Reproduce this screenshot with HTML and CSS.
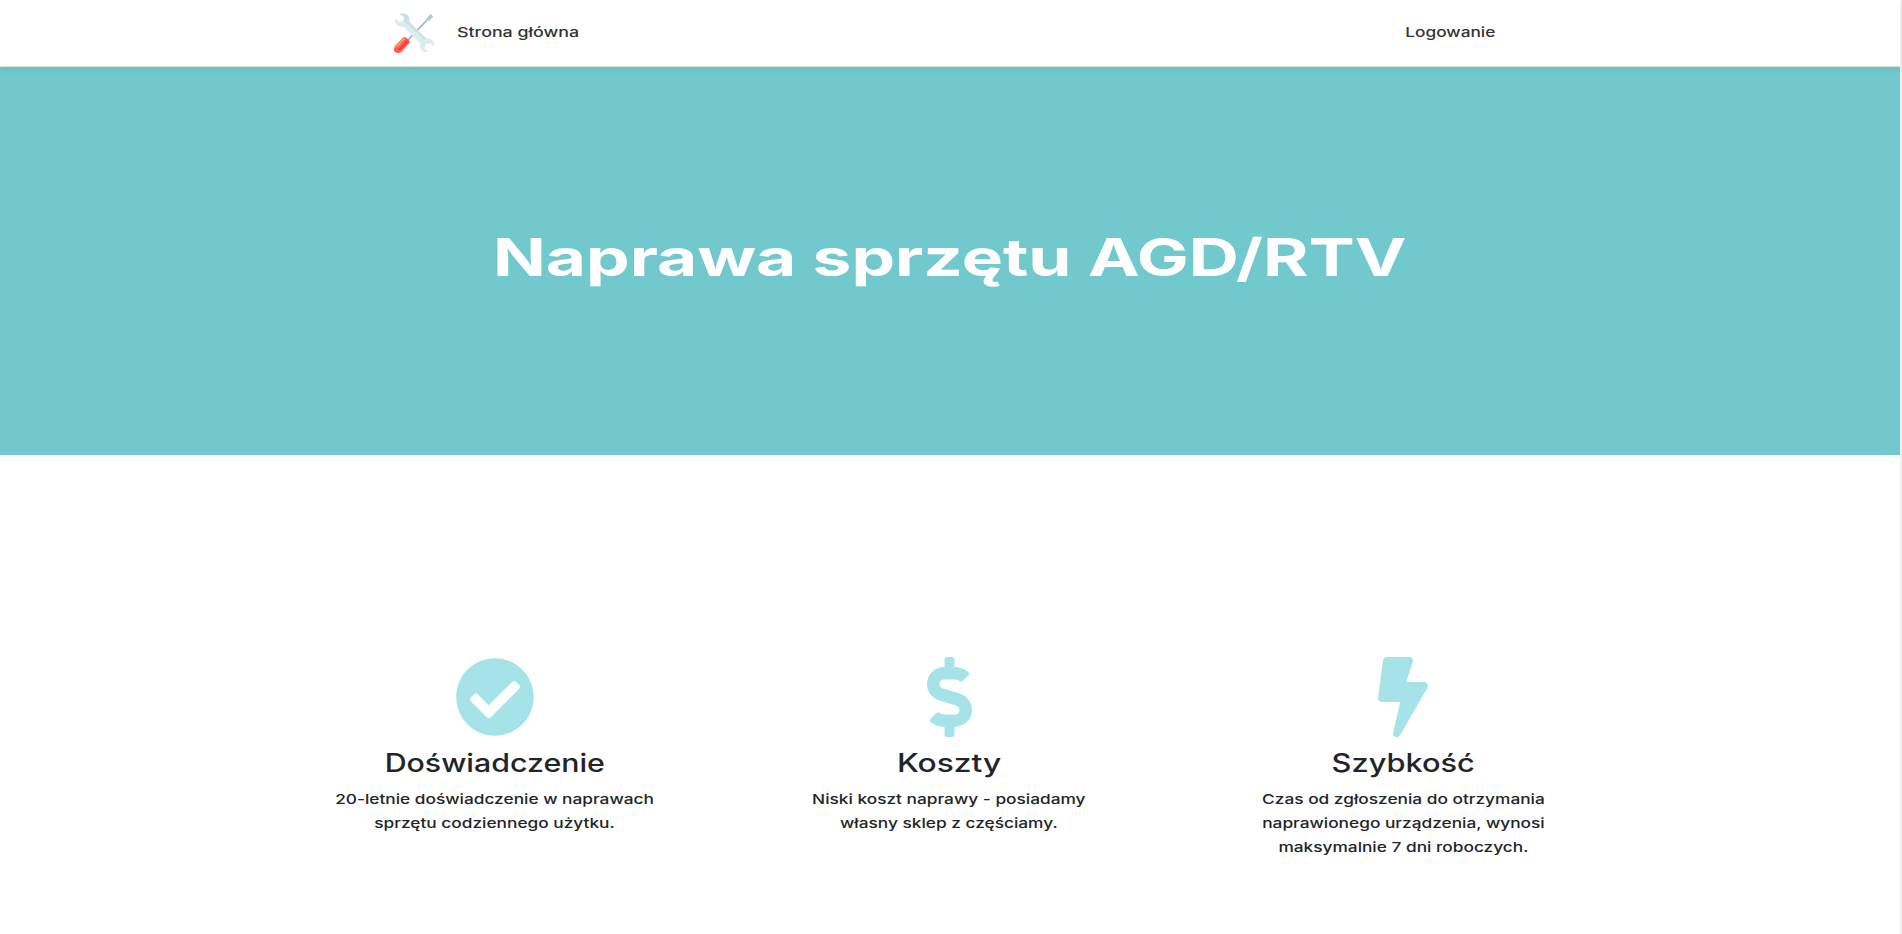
FILE: index.html
```html
<!DOCTYPE html>
<html lang="pl">
<head>
<meta charset="utf-8">
<title>Naprawa sprzętu AGD/RTV</title>
<link rel="stylesheet" href="styles.css">
</head>
<body>
<div class="page">
  <header class="navbar">
    <nav class="nav-inner">
      <svg class="logo" viewBox="0 0 40 40" aria-hidden="true">
        <path d="M35.500 4.500 14 27" stroke="#8db5bd" stroke-width="1.600"/>
        <path d="M32.500 5.500 36.500.8 39.200 3.400 35 7.800 31.800 8.400Z" fill="#a9ced4"/>
        <path d="M5.600 1.200C8 .2 11.400 0 13.500 2.100c1.900 1.900 2.200 4.300 1.500 6.400l17 16.900c2.400-.5 4.900.3 6.500 2.200 1.600 1.900 1.900 4 1.300 6.100l-3.700-3.400-4.200 1.200-1.200 4 3.600 3.200c-2.700.9-5.400.1-7-2-1.500-1.800-1.800-4.200-1.100-6.300L9.500 13.700c-2.600.5-5.100-.1-6.900-2.100C1 9.800.5 7.600 1.200 5.700l4 3.300 4.100-1.100 1-3.900Z" fill="#dfecee"/>
        <path d="M5.600 1.200C8 .2 11.400 0 13.500 2.100c1.900 1.900 2.200 4.300 1.500 6.400l17 16.900-2 1.300L11.500 9 9.300 7.900l1-3.900Z" fill="#c9e1e4"/>
        <path d="M9.200 24.600c1.200-.8 2.600-.5 3.500.4l2.400 2.300c.8.8.8 1.900.1 2.900L7.700 38.400c-1.400 1.500-4.300 2.100-6.400.9C-.7 38-.4 34.900 1 33Z" fill="#ff5a55"/>
        <path d="M9.200 24.600c1.200-.8 2.300-.6 3.100.1L4.600 33.500 0 35.200c0-.8.400-1.600 1-2.200Z" fill="#ff8e69"/>
        <path d="M13.500 27.900 5.200 37" stroke="#ef3446" stroke-width="1.500"/>
      </svg>
      <a class="nav-link home"><span class="wide home-text">Strona główna</span></a>
      <a class="nav-link login"><span class="wide login-text">Logowanie</span></a>
    </nav>
  </header>
  <section class="hero"><h1><span class="wide hero-text">Naprawa sprzętu AGD/RTV</span></h1></section>
  <main class="features">
    <article class="feature">
      <svg class="icon" viewBox="0 0 512 512"><path d="M504 256c0 136.967-111.033 248-248 248S8 392.967 8 256 119.033 8 256 8s248 111.033 248 248zM227.314 387.314l184-184c6.248-6.248 6.248-16.379 0-22.627l-22.627-22.627c-6.248-6.249-16.379-6.249-22.628 0L216 308.118l-70.059-70.059c-6.248-6.248-16.379-6.248-22.628 0l-22.627 22.627c-6.248 6.248-6.248 16.379 0 22.627l104 104c6.249 6.249 16.379 6.249 22.628.001z"/></svg>
      <h2><span class="wide experience-title">Doświadczenie</span></h2>
      <p><span class="wide">20-letnie doświadczenie w naprawach<br>sprzętu codziennego użytku.</span></p>
    </article>
    <article class="feature">
      <svg class="icon" viewBox="0 0 288 512"><path d="M209.200 233.400l-108-31.600C88.700 198.200 80 186.500 80 173.500c0-16.300 13.200-29.500 29.500-29.500h66.300c12.200 0 24.200 3.700 34.200 10.500 6.100 4.100 14.300 3.100 19.500-2l34.800-34c7.100-6.900 6.100-18.400-1.800-24.500C238 74.800 207.400 64.100 176 64V16c0-8.800-7.200-16-16-16h-32c-8.800 0-16 7.200-16 16v48h-2.500C45.800 64-5.400 118.700.5 183.600c4.200 46.100 39.400 83.600 83.800 96.600l102.500 30c12.500 3.700 21.200 15.300 21.200 28.300 0 16.300-13.200 29.500-29.500 29.500h-66.300C100 368 88 364.300 78 357.500c-6.100-4.100-14.300-3.100-19.500 2l-34.800 34c-7.100 6.900-6.100 18.400 1.800 24.500 24.500 19.200 55.100 29.900 86.500 30v48c0 8.800 7.200 16 16 16h32c8.800 0 16-7.200 16-16v-48.200c46.600-.9 90.300-28.600 105.700-72.700 21.500-61.600-14.600-124.800-72.500-141.700z"/></svg>
      <h2><span class="wide costs-title">Koszty</span></h2>
      <p><span class="wide">Niski koszt naprawy - posiadamy<br>własny sklep z częściamy.</span></p>
    </article>
    <article class="feature">
      <svg class="icon" viewBox="0 0 320 512"><path d="M296 160H180.600l42.600-129.800C227.200 15 215.700 0 200 0H56C44 0 33.800 8.900 32.200 20.800l-32 240C-1.700 275.200 9.500 288 24 288h118.700L96.600 482.500c-3.600 15.200 8 29.500 23.300 29.500 8.400 0 16.400-4.400 20.800-12l176-304c9.300-15.900-2.200-36-20.700-36z"/></svg>
      <h2><span class="wide speed-title">Szybkość</span></h2>
      <p><span class="wide">Czas od zgłoszenia do otrzymania<br>naprawionego urządzenia, wynosi<br>maksymalnie 7 dni roboczych.</span></p>
    </article>
  </main>
</div>
</body>
</html>
```
FILE: styles.css
```css
* { box-sizing: border-box; }
body {
  margin: 0;
  height: 934px;
  overflow: hidden;
  background: #f1f1f1;
  color: #212529;
  font: 450 13.5px/24px Inter, "DejaVu Sans", sans-serif;
}
.page { width: 1900px; height: 934px; background: #fff; }
.wide { display: inline-block; white-space: nowrap; transform: scaleX(1.28); }
.navbar {
  position: relative;
  height: 67px;
  background: #fff;
  border-bottom: 1px solid #dedede;
  box-shadow: 0 2px 8px rgba(0, 0, 0, .07);
}
.nav-inner { display: flex; align-items: center; height: 66px; padding: 0 405px 0 394px; }
.logo { width: 40px; height: 40px; fill: none; }
.nav-link { color: #333; margin-bottom: 2px; }
.home { margin-left: 23px; }
.home-text { transform: scaleX(1.32); transform-origin: left; }
.login { margin-left: auto; }
.login-text { transform-origin: right; }
.hero {
  display: flex;
  align-items: center;
  justify-content: center;
  height: 388px;
  padding-bottom: 6px;
  background: #72c9cd;
  color: #fff;
}
h1 { margin: 0; font-size: 52px; line-height: 62px; font-weight: 700; }
.hero-text { transform: scaleX(1.333); }
.features { display: flex; padding: 202px 270px 0 268px; }
.feature { flex: 1; display: flex; flex-direction: column; align-items: center; text-align: center; }
.icon { height: 80px; fill: #a6e3e9; }
h2 { margin: 9px 0 7px; font-size: 25px; line-height: 34px; font-weight: 500; }
.experience-title { transform: scaleX(1.213); }
.costs-title { transform: scaleX(1.27); }
.speed-title { transform: scaleX(1.23); }
p { margin: 0; }
```
